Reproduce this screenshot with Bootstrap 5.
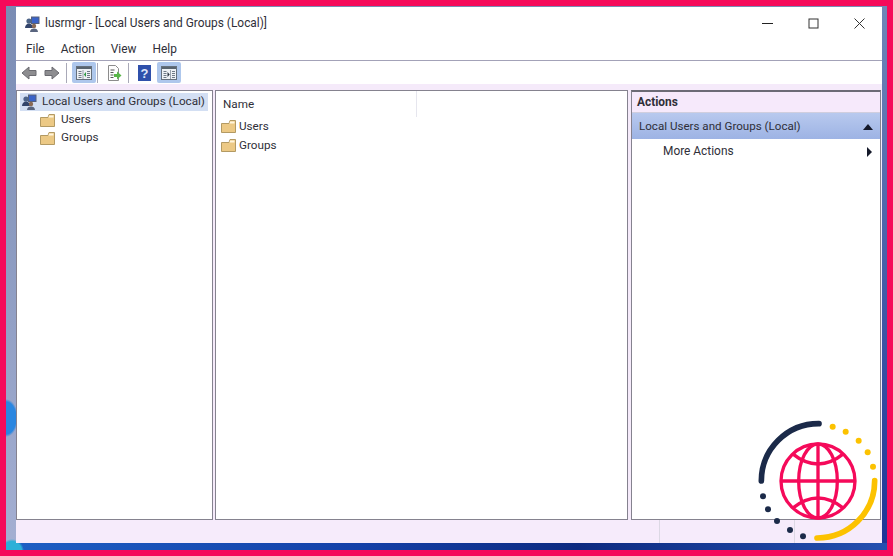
<!DOCTYPE html>
<html lang="en">
<head>
<meta charset="UTF-8">
<title>lusrmgr</title>
<link href="https://cdn.jsdelivr.net/npm/bootstrap@5.3.0/dist/css/bootstrap.min.css" rel="stylesheet">
<style>
    html, body { height: 100%; }
    body {
        margin: 0;
        background: #f50a5a;
        padding: 6px;
        font-family: Roboto, "Noto Sans", sans-serif;
        font-size: 11.9px;
        color: #2f2f38;
        overflow: hidden;
        position: relative;
    }
    .wallpaper {
        height: 544px;
        padding: 1px 5px 7px 10px;
        background:
            radial-gradient(ellipse 12px 19px at 0 412px, #2a86e0 85%, transparent 100%),
            radial-gradient(ellipse 12px 12px at 6px 545px, #2bb0d8 80%, transparent 100%),
            linear-gradient(90deg, #1d5fc4 0, #1440a8 40%, #0d2a80 65%, #2450b0 100%) bottom / 100% 7px no-repeat,
            linear-gradient(180deg, #7087b8, #3d55a4 60%, #1c3596) right / 5px 100% no-repeat,
            linear-gradient(180deg, #7a8cb4 0, #a4afd2 100%);
    }
    .app-window { height: 536px; background: #fff; }
    .title-row { height: 33px; padding: 0 0 0 8px; }
    .title-row > svg { margin-right: 5px; }
    .win-btn { width: 46px; display: flex; justify-content: center; }
    .menu-row { padding: 0 0 0 10px; gap: 16px; border-bottom: 1px solid #a3a2b8; box-sizing: content-box; height: 20px; }
    .tool-row { height: 23px; padding-left: 5px; }
    .tool-sep { width: 1px; height: 20px; background: #a9a9b8; }
    .tool-on { width: 24px; height: 21px; background: #aec7ec; border-radius: 2px; }
    .gap-l1 { margin-left: 1px; }
    .gap-l5 { margin-left: 5px; }
    .gap-l6 { margin-left: 6px; }
    .gap-l7 { margin-left: 7px; }
    .gap-l8 { margin-left: 8px; }
    .gap-l9 { margin-left: 9px; }
    .work-area { background: #f5eafa; padding-top: 6px; gap: 2px; flex: 1; min-height: 0; }
    .pane-box { background: #fff; border: 1px solid #85828f; }
    .tree-pane { width: 197px; padding: 2px 3px 1px; font-size: 11.7px; }
    .list-pane { width: 413px; margin-right: 1px; font-size: 11.7px; }
    .actions-pane { flex: 1; margin-right: 1px; border-top: 2px solid #6c6a75; }
    .tree-item { height: 18px; padding-left: 20px; gap: 6px; white-space: nowrap; }
    .tree-root { padding-left: 1px; background: #d3dff3; gap: 5px; width: 188px; }
    .name-head { height: 26px; width: 201px; padding: 2px 0 0 7px; border-right: 1px solid #e6e6ee; }
    .list-item { height: 19px; padding-left: 5px; gap: 3px; }
    .act-head { height: 21px; background: #f6e9fb; padding: 2px 0 0 5px; font-weight: 700; border-bottom: 1px solid #d0cede; }
    .act-group { height: 26px; padding: 1px 7px 0; font-size: 11.6px; background: linear-gradient(180deg, #b8c9ee, #9db3e4); }
    .act-more { height: 25px; padding: 0 8px 0 31px; }
    .tri-up { width: 0; height: 0; border: 5px solid transparent; border-top: 0; border-bottom: 6px solid #15192a; }
    .tri-right { width: 0; height: 0; border: 5px solid transparent; border-right: 0; border-left: 5px solid #15192a; }
    .status-row { height: 23px; background: #f6ebfb; }
    .status-cell { border-right: 1px solid #dcd8e4; height: 100%; }
    .corner-logo { position: absolute; left: 733px; top: 406px; width: 160px; height: 150px; }
</style>
</head>
<body>

<svg width="0" height="0" class="d-block">
    <symbol id="users-icon" viewBox="0 0 16 16">
        <rect x="7.500" y="1" width="7.500" height="6.500" fill="#3a63c8" stroke="#56607a"/>
        <circle cx="5" cy="5" r="2.600" fill="#4d6488"/>
        <path d="M1 12c0-3 2-4.500 4-4.500s4 1.500 4 4.500z" fill="#33456b"/>
        <circle cx="10" cy="10" r="2.200" fill="#8a6a55"/>
        <path d="M6 16c0-2.500 2-3.500 4-3.500s4 1 4 3.500z" fill="#59657f"/>
    </symbol>
    <symbol id="folder-icon" viewBox="0 0 15 13">
        <path d="M.5 3.500V12.500h14V.5H9L8 3.500z" fill="#ecc985" stroke="#b39a63"/>
        <path d="M9 1.500h4.500v2H8.500z" fill="#fff6dd"/>
    </symbol>
</svg>

<div class="wallpaper d-flex">
    <div class="app-window d-flex flex-column flex-grow-1">

        <div class="title-row d-flex align-items-center">
            <svg width="16" height="16"><use href="#users-icon"/></svg>
            <span class="flex-grow-1">lusrmgr - [Local Users and Groups (Local)]</span>
            <div class="d-flex">
                <div class="win-btn"><svg width="11" height="11" viewBox="0 0 11 11"><path d="M0 5.500h11" stroke="#222" fill="none"/></svg></div>
                <div class="win-btn"><svg width="11" height="11" viewBox="0 0 11 11"><rect x="1" y="1" width="9" height="9" stroke="#333" fill="none"/></svg></div>
                <div class="win-btn"><svg width="11" height="11" viewBox="0 0 11 11"><path d="M.5 .5l10 10M10.500 .5l-10 10" stroke="#333" fill="none"/></svg></div>
            </div>
        </div>

        <div class="menu-row d-flex align-items-center">
            <span>File</span><span>Action</span><span>View</span><span>Help</span>
        </div>

        <div class="tool-row d-flex align-items-center">
            <svg width="16" height="14" viewBox="0 0 16 14"><path d="M8 1 1 7l7 6V9.500h7v-5H8z" fill="#8d8d90" stroke="#6a6a70"/></svg>
            <svg class="gap-l7" width="16" height="14" viewBox="0 0 16 14"><path d="M8 1l7 6-7 6V9.500H1v-5h7z" fill="#8d8d90" stroke="#6a6a70"/></svg>
            <div class="tool-sep gap-l6"></div>
            <div class="tool-on gap-l5 d-flex align-items-center justify-content-center">
                <svg width="16" height="14" viewBox="0 0 16 14"><rect x=".5" y=".5" width="15" height="13" fill="#eef1f5" stroke="#65707c"/><path d="M1 1h14v2H1z" fill="#59646f"/><path d="M2.500 5.500h3M2.500 7.500h3M2.500 9.500h3M2.500 11.500h3M11 5.500h3M11 7.500h3M11 9.500h3M11 11.500h3" stroke="#6f7a86"/><path d="M7 4v9" stroke="#9aa3ad"/><path d="M10 6 7.800 8.500 10 11z" fill="#2f9a45"/></svg>
            </div>
            <div class="tool-sep gap-l1"></div>
            <svg class="gap-l8" width="16" height="16" viewBox="0 0 16 16"><path d="M2.500 .5h7l3 3v12h-10z" fill="#fdfdfd" stroke="#8c8c8c"/><path d="M4.500 5h4M4.500 7.500h3M4.500 10h3M4.500 12.500h3" stroke="#555"/><path d="M8 9h3V6.500l4.500 4-4.500 4V12H8z" fill="#58b548"/></svg>
            <div class="tool-sep gap-l6"></div>
            <svg class="gap-l9" width="13" height="16" viewBox="0 0 13 16"><rect width="13" height="16" fill="#2f50ab"/><text x="6.500" y="13" text-anchor="middle" fill="#dfe6fa" font-family="Liberation Sans, sans-serif" font-size="13" font-weight="700">?</text></svg>
            <div class="tool-on gap-l6 d-flex align-items-center justify-content-center">
                <svg width="16" height="14" viewBox="0 0 16 14"><rect x=".5" y=".5" width="15" height="13" fill="#eef1f5" stroke="#65707c"/><path d="M1 1h14v2H1z" fill="#59646f"/><path d="M2.500 5.500h3M2.500 7.500h3M2.500 9.500h3M2.500 11.500h3M11 5.500h3M11 7.500h3M11 9.500h3M11 11.500h3" stroke="#6f7a86"/><path d="M9.500 4v9" stroke="#9aa3ad"/><path d="M6.500 6l2.200 2.500L6.500 11z" fill="#2b3440"/></svg>
            </div>
        </div>

        <div class="work-area d-flex">
            <div class="pane-box tree-pane">
                <div class="tree-item tree-root d-flex align-items-center">
                    <svg width="16" height="16"><use href="#users-icon"/></svg>
                    <span>Local Users and Groups (Local)</span>
                </div>
                <div class="tree-item d-flex align-items-center">
                    <svg width="15" height="13"><use href="#folder-icon"/></svg>
                    <span>Users</span>
                </div>
                <div class="tree-item d-flex align-items-center">
                    <svg width="15" height="13"><use href="#folder-icon"/></svg>
                    <span>Groups</span>
                </div>
            </div>

            <div class="pane-box list-pane">
                <div class="name-head d-flex align-items-center">Name</div>
                <div class="list-item d-flex align-items-center">
                    <svg width="15" height="13"><use href="#folder-icon"/></svg>
                    <span>Users</span>
                </div>
                <div class="list-item d-flex align-items-center">
                    <svg width="15" height="13"><use href="#folder-icon"/></svg>
                    <span>Groups</span>
                </div>
            </div>

            <div class="pane-box actions-pane">
                <div class="act-head d-flex align-items-center">Actions</div>
                <div class="act-group d-flex align-items-center justify-content-between">
                    <span>Local Users and Groups (Local)</span><span class="tri-up"></span>
                </div>
                <div class="act-more d-flex align-items-center justify-content-between">
                    <span>More Actions</span><span class="tri-right"></span>
                </div>
            </div>
        </div>

        <div class="status-row d-flex">
            <div class="status-cell" style="width:644px"></div>
            <div class="status-cell" style="width:135px"></div>
        </div>
    </div>
</div>

<svg class="corner-logo" viewBox="0 0 480 450">
    <g fill="none" stroke-linecap="round" stroke-width="17">
        <path d="M85 225A172 172 0 0 1 258 53" stroke="#1b2a49"/>
        <path d="M425 224A172 172 0 0 1 252 396" stroke="#fcc200"/>
    </g>
    <g fill="#fcc200">
        <circle cx="299" cy="62" r="9"/><circle cx="338" cy="77" r="9"/><circle cx="377" cy="104" r="9"/><circle cx="404" cy="139" r="9"/><circle cx="420" cy="182" r="9"/>
    </g>
    <g fill="#1b2a49">
        <circle cx="90" cy="271" r="9"/><circle cx="105" cy="310" r="9"/><circle cx="132" cy="345" r="9"/><circle cx="171" cy="372" r="9"/><circle cx="210" cy="391" r="9"/>
    </g>
    <g fill="none" stroke="#f50a5a" stroke-width="10">
        <circle cx="255" cy="225" r="111"/>
        <ellipse cx="255" cy="225" rx="58" ry="111"/>
        <path d="M255 114V336M144 225H366"/>
        <path d="M178 143Q255 205 332 143M178 307Q255 245 332 307"/>
    </g>
</svg>

<script src="https://cdn.jsdelivr.net/npm/bootstrap@5.3.0/dist/js/bootstrap.bundle.min.js"></script>
</body>
</html>
